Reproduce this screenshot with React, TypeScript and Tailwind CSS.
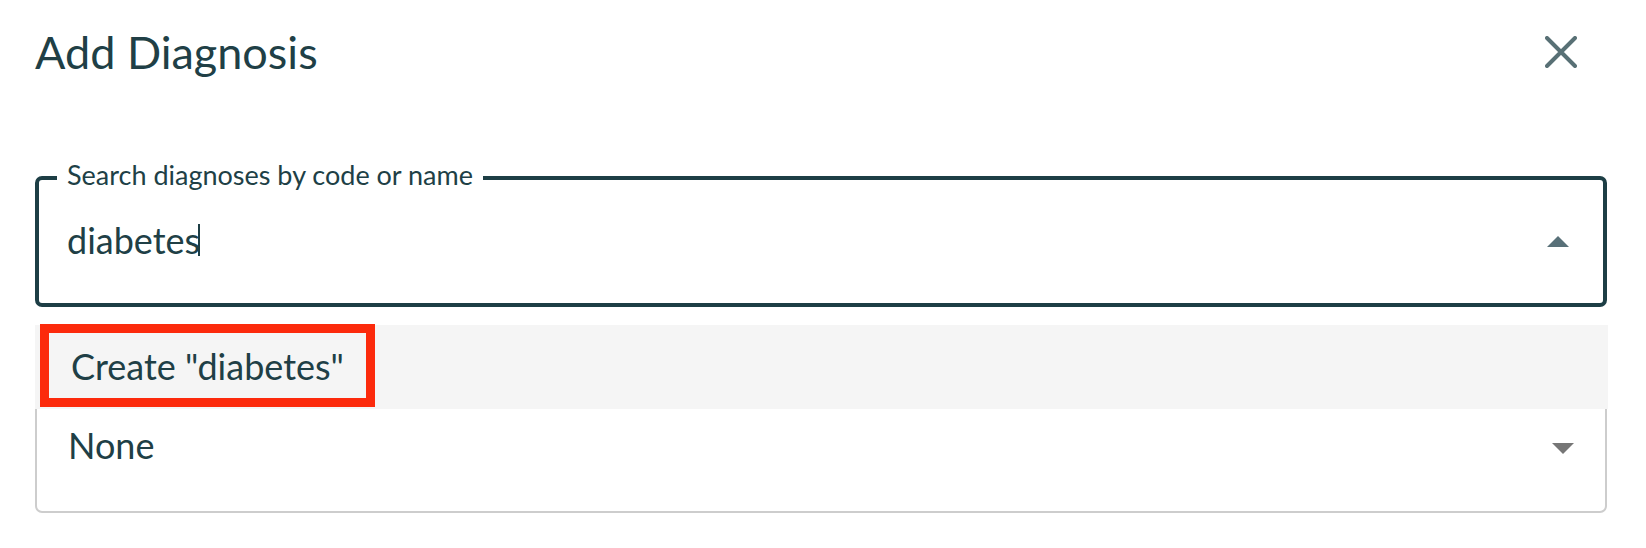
import { useState } from "react";

const ink = "text-[#203f46]";

function Caret({ up }: { up?: boolean }) {
  return (
    <svg viewBox="0 0 22 11" className="h-[11px] w-[22px] shrink-0" aria-hidden="true">
      {up ? <polygon points="0,11 11,0 22,11" fill="#587078" /> : <polygon points="0,0 22,0 11,11" fill="#767676" />}
    </svg>
  );
}

export default function App() {
  const [query] = useState("diabetes");

  return (
    <div className={`h-[548px] w-full overflow-hidden bg-white pl-[35px] pr-[39px] pt-[25px] font-[Lato,sans-serif] ${ink}`}>
      {/* Kop met sluitknop */}
      <div className="flex items-center justify-between">
        <h2 className="text-[45px] font-normal leading-[54px]">Add Diagnosis</h2>
        <button type="button" aria-label="Close" className="mr-[30px] grid h-[32px] w-[32px] place-items-center">
          <svg viewBox="0 0 32 32" className="h-[32px] w-[32px]">
            <path d="M2 2 L30 30 M30 2 L2 30" stroke="#587075" strokeWidth="4" strokeLinecap="round" />
          </svg>
        </button>
      </div>

      {/* Zoekveld, open met suggestie */}
      <div className="relative mt-[97px]">
        <div className="relative flex h-[131px] items-center rounded-[7px] border-[4px] border-[#1d3e45] pl-[28px] pr-[34px]">
          <span className="absolute left-[18px] top-[-20px] bg-white px-[10px] text-[27px] leading-[30px]">
            Search diagnoses by code or name
          </span>
          <div className="flex flex-1 items-center pb-[4px] text-[36px] leading-[42px]">
            <span>{query}</span>
            <span className="-ml-[2px] h-[32px] w-[2px] bg-[#1d3e45]" />
          </div>
          <Caret up />
        </div>

        <div className="absolute left-0 right-[-1px] top-[149px] z-10 h-[84px] bg-[#f5f5f5]">
          <div className="-mt-[1px] ml-[5px] flex h-[83px] w-[335px] items-center border-[9px] border-[#fc2a0c] pl-[22px] text-[36px] leading-[42px]">
            Create "diabetes"
          </div>
        </div>

        <div className="mt-[76px] flex h-[130px] items-center rounded-[7px] border-2 border-[#cdcdcd] pl-[31px] pr-[31px]">
          <span className="flex-1 pb-[6px] text-[36px] leading-[42px]">None</span>
          <Caret />
        </div>
      </div>
    </div>
  );
}
